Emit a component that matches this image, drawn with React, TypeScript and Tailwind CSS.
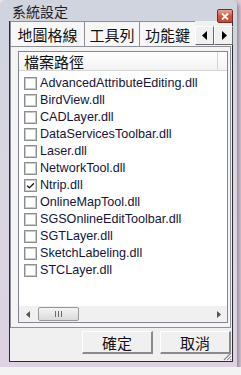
import { Check } from "lucide-react";

const files = [
  { name: "AdvancedAttributeEditing.dll", checked: false },
  { name: "BirdView.dll", checked: false },
  { name: "CADLayer.dll", checked: false },
  { name: "DataServicesToolbar.dll", checked: false },
  { name: "Laser.dll", checked: false },
  { name: "NetworkTool.dll", checked: false },
  { name: "Ntrip.dll", checked: true },
  { name: "OnlineMapTool.dll", checked: false },
  { name: "SGSOnlineEditToolbar.dll", checked: false },
  { name: "SGTLayer.dll", checked: false },
  { name: "SketchLabeling.dll", checked: false },
  { name: "STCLayer.dll", checked: false },
];

const cjk = "font-['Noto_Sans_CJK_TC','Noto_Sans_CJK_SC',sans-serif]";

const Tab = ({ label, width }: { label: string; width: string }) => (
  <div
    className={`${width} shrink-0 h-[25px] border-t border-l border-[#8d9099] bg-[#f7f7f7] flex items-center justify-center overflow-hidden whitespace-nowrap text-[15px] leading-none text-[#111] ${cjk}`}
  >
    {label}
  </div>
);

const ArrowButton = ({ dir }: { dir: "left" | "right" }) => (
  <div className="w-[19px] h-[19px] shrink-0 bg-[#f0f0f0] border-t border-l border-t-white border-l-white border-b border-r border-b-[#696969] border-r-[#696969] flex items-center justify-center">
    <svg width="6" height="9" viewBox="0 0 6 9">
      {dir === "left" ? <path d="M5 0 L0 4.5 L5 9 Z" fill="#000" /> : <path d="M1 0 L6 4.5 L1 9 Z" fill="#000" />}
    </svg>
  </div>
);

const Checkbox = ({ checked }: { checked: boolean }) => (
  <div className="w-[13px] h-[13px] shrink-0 border border-[#8e8f8f] bg-[#c9c9c9] p-[1px]">
    <div className="w-full h-full bg-white flex items-center justify-center">
      {checked && <Check size={10} strokeWidth={3.5} color="#111" />}
    </div>
  </div>
);

const DialogButton = ({ label }: { label: string }) => (
  <div
    className={`w-[71px] h-[23px] bg-[#f0f0f0] border-t border-l border-t-white border-l-white border-b-2 border-r-2 border-b-[#8a8a8a] border-r-[#8a8a8a] flex items-center justify-center text-[15px] leading-none text-[#111] ${cjk}`}
  >
    {label}
  </div>
);

export default function App() {
  return (
    <div className="w-[241px] h-[375px] overflow-hidden bg-gradient-to-r from-[#e9e6ec] to-[#d9c9da] flex flex-col">
      <div className="w-[237px] h-[367px] shrink-0 rounded-t-[5px] bg-gradient-to-b from-[#cfd4df] via-[#d9d6e0] to-[#ddd2e2] flex flex-col pl-[9px] pr-[4px] pb-[5px] shadow-[2px_3px_4px_rgba(0,0,0,0.35)]">
        {/* title bar */}
        <div className="h-[21px] shrink-0 flex items-start">
          <span className={`mt-[4px] ml-[3px] text-[14px] leading-none text-[#1e1e28] ${cjk}`}>系統設定</span>
          <div className="ml-auto mt-[9px] w-[16px] h-[14px] rounded-[2px] border border-[#7a2a20] bg-gradient-to-b from-[#e8a590] via-[#d2533a] to-[#c84a30] flex items-center justify-center z-10">
            <svg width="8" height="7" viewBox="0 0 8 7">
              <path d="M1 0.5 L7 6.5 M7 0.5 L1 6.5" stroke="#fff" strokeWidth="2" />
            </svg>
          </div>
        </div>

        {/* client area */}
        <div className="relative flex-1 min-h-0 border border-[#2b2b30] border-t-0 bg-[#f0f0f0] flex flex-col">
          {/* tab strip */}
          <div className="h-[25px] shrink-0 flex">
            <Tab label="地圖格線" width="w-[74px]" />
            <Tab label="工具列" width="w-[55px]" />
            <Tab label="功能鍵" width="w-[56px]" />
            <div className="flex items-end pb-[1px]">
              <ArrowButton dir="left" />
              <ArrowButton dir="right" />
            </div>
          </div>

          {/* tab panel */}
          <div className="h-[282px] shrink-0 mr-[1px] border border-[#8d9099] bg-[#f4f4f4] pl-[7px] pr-[2px] pt-[4px] pb-[4px] flex">
            <div className="flex-1 border border-[#828790] bg-white flex flex-col">
              <div className="h-[19px] shrink-0 flex border-b border-[#d5d5d5] bg-gradient-to-b from-white to-[#f3f3f3]">
                <div className={`w-[199px] border-r border-[#d5d5d5] pl-[5px] flex items-center text-[15px] leading-none text-[#111] ${cjk}`}>
                  檔案路徑
                </div>
              </div>
              <div className="flex-1 pt-[4px] flex flex-col">
                {files.map((f) => (
                  <div key={f.name} className="h-[17px] flex items-center pl-[5px] gap-[3px]">
                    <Checkbox checked={f.checked} />
                    <span className="font-['Liberation_Sans',Arial,sans-serif] text-[12.6px] leading-none text-[#14143c] whitespace-nowrap">
                      {f.name}
                    </span>
                  </div>
                ))}
              </div>
              {/* horizontal scrollbar */}
              <div className="h-[16px] shrink-0 bg-[#f0f0f0] flex items-center">
                <div className="w-[17px] h-full flex items-center justify-center">
                  <svg width="4" height="7" viewBox="0 0 4 7">
                    <path d="M4 0 L0 3.5 L4 7 Z" fill="#555" />
                  </svg>
                </div>
                <div className="ml-[2px] w-[41px] h-[14px] rounded-[2px] border border-[#979797] bg-gradient-to-b from-[#f4f4f4] to-[#dadada] flex items-center justify-center gap-[2px]">
                  <div className="w-[1px] h-[6px] bg-[#6a6a6a]" />
                  <div className="w-[1px] h-[6px] bg-[#6a6a6a]" />
                  <div className="w-[1px] h-[6px] bg-[#6a6a6a]" />
                </div>
                <div className="flex-1" />
                <div className="w-[17px] h-full flex items-center justify-center">
                  <svg width="4" height="7" viewBox="0 0 4 7">
                    <path d="M0 0 L4 3.5 L0 7 Z" fill="#555" />
                  </svg>
                </div>
              </div>
            </div>
          </div>

          {/* buttons */}
          <div className="flex-1 flex justify-end items-start pt-[3px] pr-[1px] gap-[7px]">
            <DialogButton label="確定" />
            <DialogButton label="取消" />
          </div>

          {/* size grip */}
          <svg className="absolute right-0 bottom-0" width="10" height="10" viewBox="0 0 10 10">
            <path d="M9 2 L2 9 M9 5 L5 9 M9 8 L8 9" stroke="#8a8a8a" strokeWidth="1.2" />
            <path d="M10 3 L3 10 M10 6 L6 10" stroke="#fff" strokeWidth="1" />
          </svg>
        </div>
      </div>
      <div className="flex-1 bg-[#f3f3f3]" />
    </div>
  );
}
